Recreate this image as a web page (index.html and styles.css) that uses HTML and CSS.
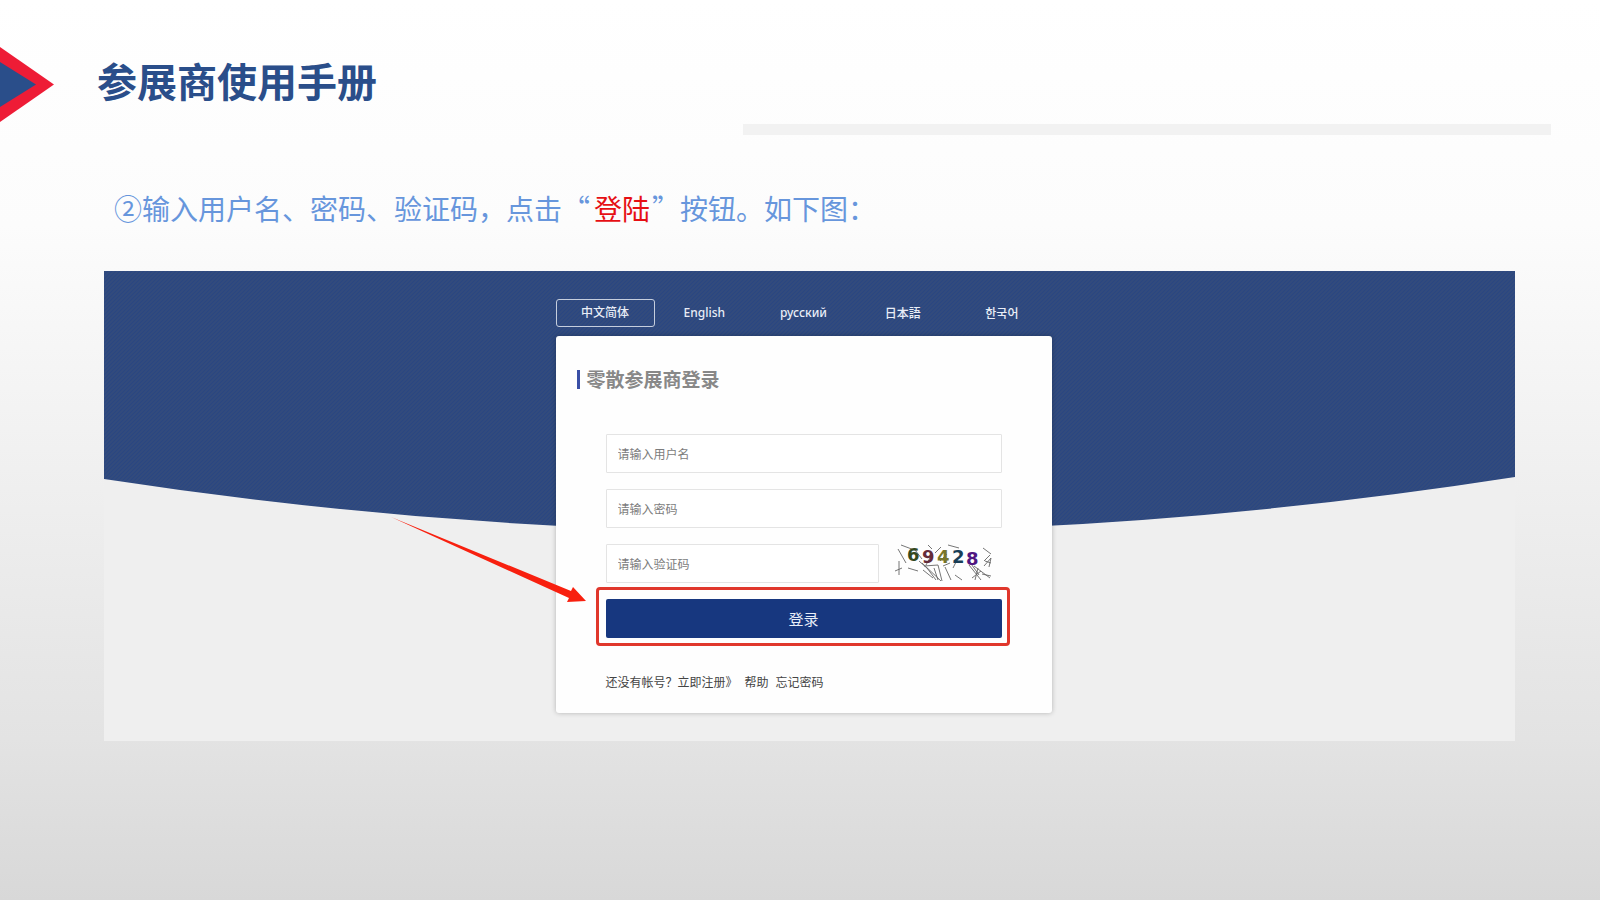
FILE: index.html
```html
<!DOCTYPE html>
<html lang="zh-CN">
<head>
<meta charset="utf-8">
<meta name="viewport" content="width=device-width, initial-scale=1">
<title>参展商使用手册</title>
<link rel="stylesheet" href="styles.css">
</head>
<body>
<header class="header">
  <svg class="marker" viewBox="0 0 54 75" aria-hidden="true">
    <path fill="#ee1c36" d="M0 0L54 37.5L0 75Z"/>
    <path fill="#2a4e8a" d="M0 15L36 37.5L0 60Z"/>
  </svg>
  <h1 class="title">参展商使用手册</h1>
</header>
<hr class="rule">
<main>
  <p class="step"><span>②输入用户名、密码、验证码，点击“</span><strong class="key">登陆</strong><span>”按钮。如下图：</span></p>
  <section class="shot">
    <svg class="hero" viewBox="0 0 1411 262" preserveAspectRatio="none" aria-hidden="true">
      <defs>
        <pattern id="stripes" width="4" height="4" patternUnits="userSpaceOnUse">
          <rect width="4" height="4" fill="#334b7c"/>
          <path d="M-1 1L1 -1M0 4L4 0M3 5L5 3" stroke="#294681" stroke-width="1.2"/>
        </pattern>
      </defs>
      <path fill="url(#stripes)" d="M0 0H1411V206Q705 316 0 208Z"/>
    </svg>
    <div class="login">
      <nav class="langs">
        <a class="lang active" href="#">中文简体</a>
        <a class="lang" href="#">English</a>
        <a class="lang" href="#">русский</a>
        <a class="lang" lang="ja" href="#">日本語</a>
        <a class="lang" lang="ko" href="#">한국어</a>
      </nav>
      <form class="card">
        <h2 class="card-title">零散参展商登录</h2>
        <div class="fields">
          <input class="field" type="text" aria-label="用户名" placeholder="请输入用户名">
          <input class="field" type="password" aria-label="密码" placeholder="请输入密码">
          <div class="code-row">
            <input class="field" type="text" aria-label="验证码" placeholder="请输入验证码">
            <svg class="captcha" viewBox="0 0 104 39" role="img" aria-label="69428">
              <path stroke="#666" stroke-width="0.9" fill="none" d="M3 5L11 19M6 1L22 7M4 17V31M0 27L7 24M13 24L23 27M20 6L27 15M24 17L33 25M27 19L46 37M29 22L43 21M32 24L41 36M43 21L47 37M39 24L43 36M28 26L38 34M50 23L56 36M60 31L67 36M53 1L64 4M33 1L37 5M46 3L40 9M48 22L55 19M36 12L31 21M45 17L52 10M62 16L58 24M74 21L86 36M79 22L95 34M83 24L80 36M87 30L96 32M74 17L84 31M77 34L86 27M88 4L96 10M89 17L95 11M89 22L96 14M96 14L94 23M90 17L96 19"/>
              <g class="digits">
                <text x="12" y="17" fill="#34491f">6</text>
                <text x="27" y="19" fill="#642c3a">9</text>
                <text x="42" y="19" fill="#77752a">4</text>
                <text x="57" y="19" fill="#193e57">2</text>
                <text x="71" y="21" fill="#4f1681">8</text>
              </g>
            </svg>
          </div>
          <div class="submit-wrap">
            <button class="submit" type="button">登录</button>
            <svg class="arrow" viewBox="0 0 196 87" aria-hidden="true">
              <path fill="#f8200f" d="M0 0L180 74L182 70L195 84L176 85L178 81Z"/>
            </svg>
          </div>
        </div>
        <p class="links"><span>还没有帐号<span class="mark">？</span><a href="#">立即注册》</a></span><a href="#">帮助</a><a href="#">忘记密码</a></p>
      </form>
    </div>
  </section>
</main>
</body>
</html>
```
FILE: styles.css
```css
* { box-sizing: border-box; }

body {
  margin: 0;
  min-height: 100vh;
  padding-top: 47px;
  background: linear-gradient(#fff 0%, #fcfcfc 25%, #f0f0f0 52%, #e3e3e3 82%, #d8d8d8 100%) no-repeat;
  font-family: "Noto Sans", "Noto Sans CJK SC", sans-serif;
}

a { color: inherit; text-decoration: none; }

.header { display: flex; align-items: flex-start; gap: 43px; }
.marker { width: 54px; height: 75px; }
.title {
  margin: 0;
  padding-top: 5px;
  font: bold 40px/56px "Noto Sans CJK SC", sans-serif;
  color: #2a4e8a;
}
.rule {
  width: 50.5%;
  height: 11px;
  margin: 2px 49px 0 auto;
  border: 0;
  background: #f2f2f2;
}

.step {
  display: flex;
  margin: 53px 0 43px 114px;
  font: 28px/40px "Noto Sans CJK SC", sans-serif;
  color: #6796dc;
}
.key { margin: 0 2px 0 4px; font-weight: 400; color: #e60f14; }

.shot {
  position: relative;
  margin: 0 85px 0 104px;
  padding: 28px 12px 28px 0;
  background: #efefef;
}
.hero { position: absolute; top: 0; left: 0; width: 100%; height: 262px; }

.login { position: relative; width: 496px; margin: 0 auto; }
.langs { display: grid; grid-template-columns: repeat(5, 1fr); margin-bottom: 9px; }
.lang {
  border: 1px solid transparent;
  border-radius: 3px;
  font-size: 12px;
  font-weight: 500;
  line-height: 26px;
  text-align: center;
  color: #e8edf6;
}
.lang:lang(ja) { font-family: "Noto Sans CJK JP", sans-serif; }
.lang:lang(ko) { font-family: "Noto Sans CJK KR", sans-serif; }
.active { border-color: #c5cede; }

.card {
  padding: 33px 50px 21px;
  border-radius: 3px;
  background: #fefefe;
  box-shadow: 0 0 5px rgba(0, 0, 0, 0.25);
}
.card-title {
  display: flex;
  align-items: center;
  gap: 7px;
  margin: 0 0 45px -29px;
  font: bold 19px/20px "Noto Sans CJK SC", sans-serif;
  color: #888;
}
.card-title::before { content: ""; width: 3px; height: 19px; background: #3a4fa6; }

.fields { display: grid; gap: 16px; }
.field {
  width: 100%;
  height: 39px;
  padding: 0 11px;
  border: 1px solid #e4e4e4;
  border-radius: 1px;
  background: #fff;
  font: 12px "Noto Sans CJK SC", sans-serif;
  color: #333;
}
.field::placeholder { color: #7c7c7c; opacity: 1; }
.code-row { display: grid; grid-template-columns: 1fr 104px; gap: 16px; padding-right: 3px; }
.captcha { width: 104px; height: 39px; }
.digits { font: bold 18px "DejaVu Sans", sans-serif; }

.submit-wrap { position: relative; }
.submit-wrap::after {
  content: "";
  position: absolute;
  inset: -12px -8px -8px -10px;
  border: 3px solid #e0372c;
  border-radius: 4px;
  pointer-events: none;
}
.submit {
  display: block;
  width: 100%;
  height: 39px;
  border: 0;
  border-radius: 2px;
  background: #17377f;
  font: 15px "Noto Sans CJK SC", sans-serif;
  color: #e8edf8;
}
.arrow { position: absolute; top: -82px; left: -215px; width: 196px; height: 87px; }

.links {
  display: flex;
  gap: 7px;
  margin: 34px 0 0;
  font: 12px/20px "Noto Sans CJK SC", sans-serif;
  color: #444;
}
.mark { font-family: "Noto Sans CJK TC", sans-serif; }
```
